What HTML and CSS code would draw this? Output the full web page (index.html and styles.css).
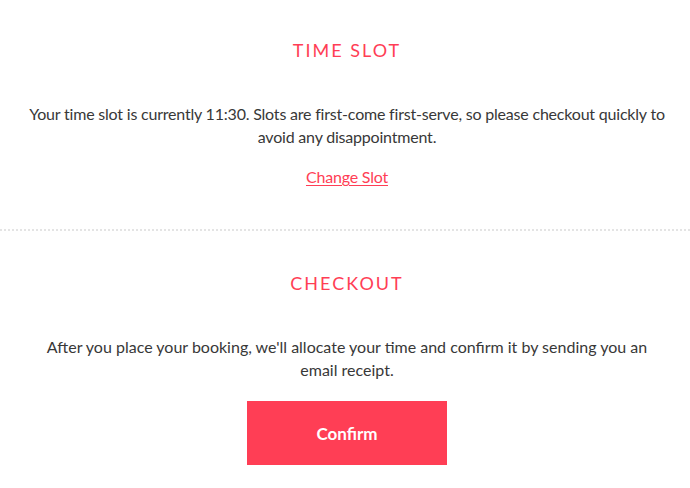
FILE: index.html
```html
<!DOCTYPE html>
<html lang="en">
<head>
    <meta charset="UTF-8">
    <meta name="viewport" content="width=device-width, initial-scale=1.0">
    <title>Checkout</title>
    <link rel="stylesheet" href="styles.css">
</head>
<body>
    <!-- Time slot -->
    <section class="panel panel-slot">
        <h2 class="panel-title">TIME SLOT</h2>
        <p class="panel-text">Your time slot is currently 11:30. Slots are first-come first-serve, so please checkout quickly to avoid any disappointment.</p>
        <a class="panel-link" href="#">Change Slot</a>
    </section>

    <!-- Checkout -->
    <section class="panel">
        <h2 class="panel-title">CHECKOUT</h2>
        <p class="panel-text panel-text-narrow">After you place your booking, we'll allocate your time and confirm it by sending you an email receipt.</p>
        <button class="confirm-btn" type="button">Confirm</button>
    </section>
</body>
</html>
```
FILE: styles.css
```css
body {
    margin: 0;
    background: #fff;
    font-family: Lato, "Noto Sans", sans-serif;
    color: #383838;
}

.panel {
    display: flex;
    flex-direction: column;
    align-items: center;
    padding: 39px 22px 0 26px;
    text-align: center;
}

.panel-slot {
    padding-bottom: 41px;
    border-bottom: 2px dotted #e4e4e4; /* divider between sections */
}

.panel-slot + .panel {
    padding-top: 41px;
}

.panel-title {
    margin: 0 0 41px;
    font-size: 18px;
    line-height: 22px;
    font-weight: 400;
    letter-spacing: 2px;
    color: #ff3e55;
}

.panel-text {
    margin: 0;
    font-size: 16px;
    line-height: 23px;
    letter-spacing: -0.2px;
}

.panel-text-narrow {
    max-width: 610px;
    letter-spacing: 0;
}

.panel-link {
    margin-top: 17px;
    font-size: 16px;
    line-height: 23px;
    letter-spacing: -0.2px;
    color: #ff3e55;
    text-decoration: underline;
    text-underline-offset: 2px;
}

.confirm-btn {
    margin-top: 20px;
    width: 200px;
    height: 64px;
    border: none;
    background: #ff3e55;
    color: #fff;
    font-family: Lato, "Noto Sans", sans-serif;
    font-size: 17px;
    font-weight: 700;
    cursor: pointer;
}

.confirm-btn:hover {
    background: #f0314a;
}
```
